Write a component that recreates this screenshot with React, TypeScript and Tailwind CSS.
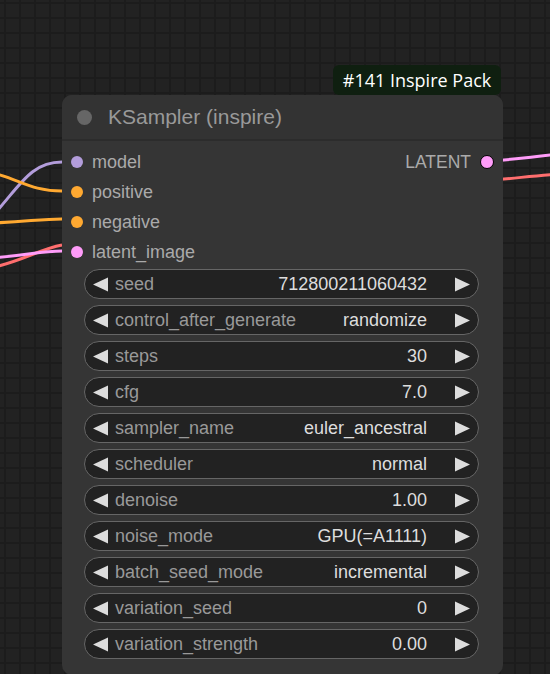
// ComfyUI-style node: KSampler (inspire) on a grid canvas.

type Input = { name: string; color: string };
type Widget = { label: string; value: string };

const inputs: Input[] = [
  { name: "model", color: "bg-[#b39ddb]" },
  { name: "positive", color: "bg-[#ffa931]" },
  { name: "negative", color: "bg-[#ffa931]" },
  { name: "latent_image", color: "bg-[#ff9cf9]" },
];

const widgets: Widget[] = [
  { label: "seed", value: "712800211060432" },
  { label: "control_after_generate", value: "randomize" },
  { label: "steps", value: "30" },
  { label: "cfg", value: "7.0" },
  { label: "sampler_name", value: "euler_ancestral" },
  { label: "scheduler", value: "normal" },
  { label: "denoise", value: "1.00" },
  { label: "noise_mode", value: "GPU(=A1111)" },
  { label: "batch_seed_mode", value: "incremental" },
  { label: "variation_seed", value: "0" },
  { label: "variation_strength", value: "0.00" },
];

function Arrow({ dir }: { dir: "left" | "right" }) {
  return (
    <svg width="15" height="15" viewBox="0 0 15 15" className="shrink-0">
      {dir === "left" ? (
        <polygon points="15,0.5 15,14.5 0,7.5" fill="#dddddd" />
      ) : (
        <polygon points="0,0.5 0,14.5 15,7.5" fill="#dddddd" />
      )}
    </svg>
  );
}

function Wires() {
  return (
    <svg className="absolute inset-0" width="550" height="674" viewBox="0 0 550 674" fill="none">
      <path d="M -40 245 C 15 205, 20 162, 62 162" stroke="#b39ddb" strokeWidth="3" />
      <path d="M -40 170 C 15 170, 20 191, 62 191" stroke="#ffa931" strokeWidth="3" />
      <path d="M -10 223 C 25 222, 40 219, 62 219" stroke="#ffa931" strokeWidth="3" />
      <path d="M -10 268 C 20 262, 40 249, 62 245" stroke="#ff6e6e" strokeWidth="3" />
      <path d="M -10 258 C 25 256, 40 251, 62 251" stroke="#ff9cf9" strokeWidth="3" />
      <path d="M 490 161 C 510 160, 530 157, 560 154" stroke="#ff9cf9" strokeWidth="3" />
      <path d="M 490 180 C 510 179, 530 176, 560 174" stroke="#ff6e6e" strokeWidth="3" />
    </svg>
  );
}

export default function App() {
  return (
    <div className="relative h-[674px] w-[550px] overflow-hidden bg-[#222222] bg-[linear-gradient(to_right,#1c1c1c_2px,transparent_2px),linear-gradient(to_bottom,#1c1c1c_2px,transparent_2px)] [background-size:15px_15px] [background-position:4px_2px] font-['Liberation_Sans',Arial,sans-serif]">
      <Wires />

      <div className="absolute left-[333px] top-[65px] flex h-[30px] w-[168px] items-center justify-center rounded-[6px] bg-[#0f1f10] font-['Open_Sans',sans-serif] text-[18px] text-white">
        #141 Inspire Pack
      </div>

      <div className="absolute left-[62px] top-[95px] flex w-[441px] flex-col rounded-[10px] bg-[#353535] pb-[16px]">
        <div className="flex h-[46px] items-center gap-[16px] rounded-t-[10px] border-b-2 border-[#2c2c2c] bg-[#333333] pl-[15px]">
          <span className="h-[15px] w-[15px] rounded-full bg-[#666666]" />
          <span className="text-[21px] text-[#999999]">KSampler (inspire)</span>
        </div>

        <div className="relative flex flex-col pt-[6px]">
          {inputs.map((inp) => (
            <div key={inp.name} className="flex h-[30px] items-center gap-[9px] pl-[9px] text-[18px] text-[#aaaaaa]">
              <span className={`h-[12px] w-[12px] rounded-full ${inp.color}`} />
              <span>{inp.name}</span>
            </div>
          ))}
          <div className="absolute right-[9px] top-[6px] flex h-[30px] items-center gap-[9px] text-[17.5px] text-[#aaaaaa]">
            <span>LATENT</span>
            <span className="h-[14px] w-[14px] rounded-full border border-black bg-[#ff9cf9]" />
          </div>
        </div>

        <div className="mt-[2px] flex flex-col gap-[6px] pl-[22px]">
          {widgets.map((w) => (
            <div
              key={w.label}
              className="flex h-[30px] w-[395px] items-center rounded-full border border-[#666666] bg-[#222222] pl-[8px] pr-[8px] text-[18px]"
            >
              <Arrow dir="left" />
              <span className="ml-[7px] text-[#999999]">{w.label}</span>
              <span className="ml-auto text-[#dddddd]">{w.value}</span>
              <span className="ml-[28px]">
                <Arrow dir="right" />
              </span>
            </div>
          ))}
        </div>
      </div>
    </div>
  );
}
